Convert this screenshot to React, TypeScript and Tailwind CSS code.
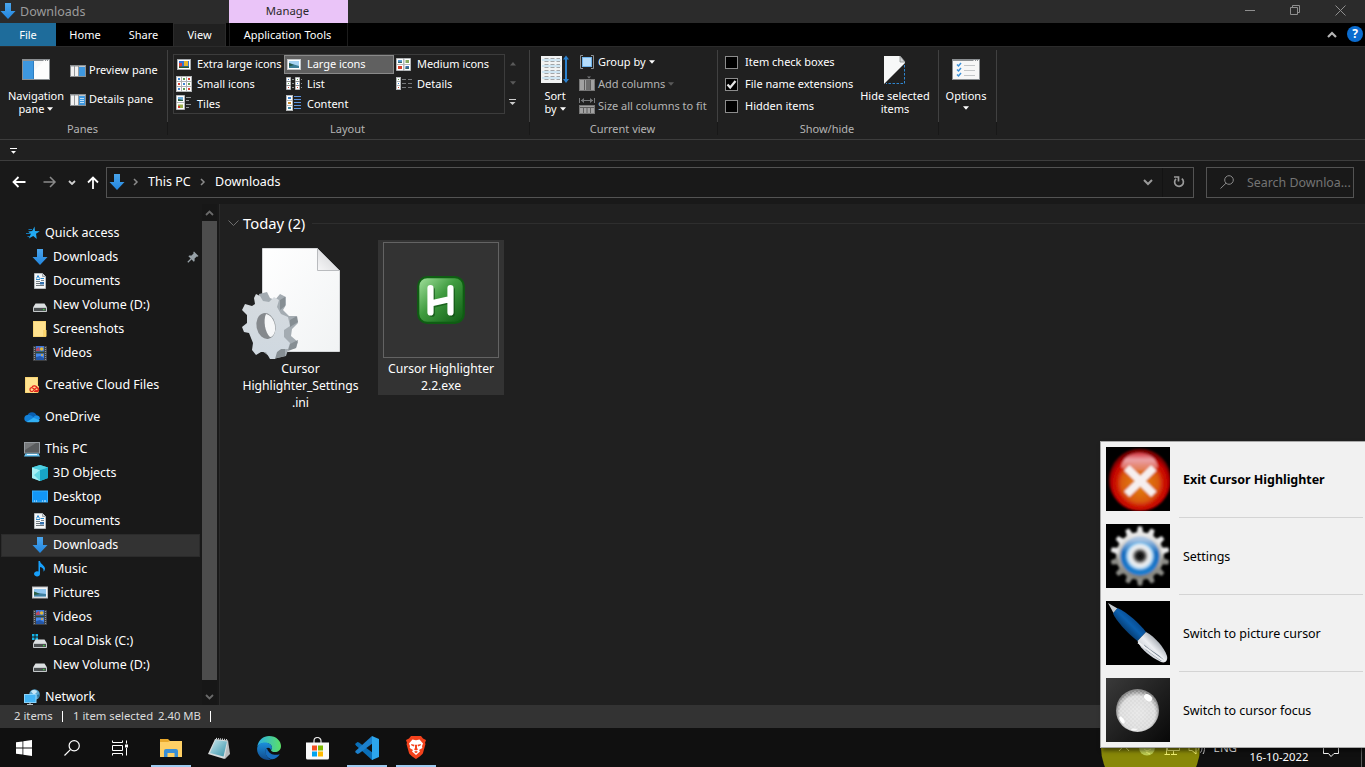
import type { ReactNode } from "react";

/* ---------- icons ---------- */

const Svg = ({ w, h, vb, children, className = "" }: { w: number; h: number; vb?: string; children: ReactNode; className?: string }) => (
  <svg width={w} height={h} viewBox={vb ?? `0 0 ${w} ${h}`} className={`block shrink-0 ${className}`}>
    {children}
  </svg>
);

const DownArrow = () => (
  <Svg w={16} h={16}>
    <defs>
      <linearGradient id="dl" x1="0" y1="0" x2="0" y2="1">
        <stop offset="0" stopColor="#4aa5ec" />
        <stop offset="1" stopColor="#2286df" />
      </linearGradient>
    </defs>
    <path d="M5 0H11V8H15.5L8 16L.5 8H5Z" fill="url(#dl)" />
  </Svg>
);

const Star = () => (
  <Svg w={16} h={16}>
    <path d="M10.5 1.5L11 6L15.8 6.2L12 8.8L12.8 14L9.2 10.9L4.8 13.5L6.8 9L4.2 6.5L8.2 6Z" fill="#22aaf2" />
    <path d="M4.5 4.5H8M2 8.5H6M3.5 11.5H6" stroke="#1577b5" strokeWidth="1" />
  </Svg>
);

const Doc = () => (
  <Svg w={16} h={16}>
    <path d="M2.5 .5H10.5L13.5 3.5V15.5H2.5Z" fill="#f4f6f7" stroke="#b4b9bc" />
    <path d="M10.5 .5V3.5H13.5" fill="#cfd4d7" stroke="#9ea4a8" />
    <path d="M4.5 5.500L6 2.5L7.5 5.500M4 6.5H8M8.5 5.500H12" stroke="#2a89cf" fill="none" />
    <path d="M4 8.5H8M9 7.5H12" stroke="#7c8488" />
    <path d="M4 10.5H8M4 12.5H12" stroke="#6d7478" />
    <rect x="8" y="9" width="4" height="2.500" fill="#2f6fae" />
  </Svg>
);

const Drive = ({ win = false }: { win?: boolean }) => (
  <Svg w={16} h={16}>
    {win && <path d="M0 1H2.500V3.500H0ZM3.500 1H6V3.500H3.500ZM0 4.500H2.500V7H0ZM3.500 4.500H6V7H3.500Z" fill="#13b5ea" />}
    <path d="M3.500 6.500H12.500L15 10.500H1Z" fill="#dcdfe1" />
    <rect x="1" y="10" width="14" height="5" rx="0.8" fill="#c4c8ca" />
    <rect x="2" y="11" width="12" height="3" fill="#4a4e50" />
    <rect x="11" y="12" width="1.500" height="1.200" fill="#35d839" />
  </Svg>
);

const Folder = ({ cc = false }: { cc?: boolean }) => (
  <Svg w={16} h={16}>
    <rect x="1" y="0" width="13" height="16" fill="#eec65c" />
    <path d="M1.500 0.5H13.500V9H11.500V15.5H1.500Z" fill="#ffe28f" />
    <rect x="12" y="9" width="2.500" height="6.5" fill="#ffd76b" />
    {cc && (
      <>
        <rect x="5" y="8" width="10" height="7.500" rx="3" fill="#ffd98a" />
        <path d="M9 14.500H7.500A2 2 0 0 1 7 10.800C8.500 9.800 10 12.500 11.500 13.200A1.500 1.500 0 1 0 12.500 10.800C11 10.500 9.800 14.500 8 14.500M8 9.800C9.500 8.300 12.500 8.500 13 10.500A2 2 0 0 1 12.500 14.500H10" stroke="#e2231a" strokeWidth="1.200" fill="none" />
      </>
    )}
  </Svg>
);

const Film = () => (
  <Svg w={16} h={16}>
    <rect x="1" y="1" width="14" height="15" fill="#3e4043" />
    <path d="M2.500 2V15M13.500 2V15" stroke="#8f9397" strokeWidth="1.200" strokeDasharray="1 1" />
    <rect x="4" y="1" width="8" height="7" fill="#3d74d9" />
    <rect x="4" y="8.500" width="8" height="6.500" fill="#4489ee" />
    <path d="M4 4L7 2L8 6H4Z" fill="#b94a60" />
    <circle cx="9.700" cy="4" r="1.800" fill="#e0b83a" />
    <path d="M4 8V6.500H12V8Z" fill="#314a2f" />
    <circle cx="10" cy="10" r="1" fill="#e0a83a" />
    <path d="M4 12L8 11L12 13V15H4Z" fill="#2457a8" />
  </Svg>
);

const Cloud = () => (
  <Svg w={16} h={16}>
    <path d="M3.500 6.500A4.800 4.800 0 0 1 12.500 6.300L14 8L8 10Z" fill="#0a5fb0" />
    <path d="M3.200 13A3.600 3.600 0 0 1 3.500 5.900C6 5.600 8 7 10 8.500L6 13Z" fill="#1280d8" />
    <path d="M10 7.500A3.500 3.500 0 0 1 16 9.500L14 12L8 10Z" fill="#1b8ee4" />
    <path d="M2.500 13L9.500 8.800L15.600 11.200A2.200 2.200 0 0 1 14 13.300H4Z" fill="#32b0f4" />
  </Svg>
);

const Pc = () => (
  <Svg w={16} h={16}>
    <rect x="0.5" y="1.500" width="15" height="10.500" fill="#77797b" stroke="#969ba0" />
    <path d="M1 11.500V9L12 2H15V11.500Z" fill="#5a5c5e" />
    <path d="M1.500 12.500H14.500L16 15.500H0Z" fill="#66c3f2" />
    <path d="M3 13.500H13" stroke="#e9f7ff" />
  </Svg>
);

const Cube = () => (
  <Svg w={16} h={16}>
    <path d="M8 0L16 2.500V13L8 16L0 13V2.500Z" fill="#38c3dc" />
    <path d="M0 2.500L8 5V16L0 13Z" fill="#a6f0f5" />
    <path d="M8 5L16 2.500V13L8 16Z" fill="#17a6c8" />
    <path d="M8 0L16 2.500L8 5L0 2.500Z" fill="#4fd0e2" />
    <path d="M8 5L2 10L8 16Z" fill="#62d8e4" />
  </Svg>
);

const DesktopI = () => (
  <Svg w={16} h={16}>
    <rect x="0.5" y="2" width="15" height="11" fill="#1296f5" stroke="#35aefc" />
    <path d="M2 12H3M4 12H5M10 12H11M12 12H14" stroke="#d6f0ff" />
  </Svg>
);

const Note = () => (
  <Svg w={16} h={16}>
    <path d="M6.500 0H8C8.200 3 12.500 4 13 7.500C13 9 12.300 10 11.500 10.700C12 7.800 10.500 6.500 8 6V12.500A3 2.600 0 1 1 6.500 10.600Z" fill="#18a0fb" />
  </Svg>
);

const Picture = () => (
  <Svg w={16} h={16}>
    <rect x="0.5" y="2" width="15" height="11" fill="#f5f6f7" stroke="#b9bcbf" />
    <rect x="2" y="4" width="12" height="7.500" fill="#8fc6f0" />
    <path d="M2 7L6 8L14 9V11.500H2Z" fill="#3f7fa0" />
    <path d="M2 6.500L8 9L2 10Z" fill="#2d6144" />
  </Svg>
);

const NetworkI = () => (
  <Svg w={16} h={16}>
    <circle cx="10.500" cy="5.500" r="5.300" fill="#5aa6cf" />
    <path d="M7 2.500C9 0 13 1 13 3L10 6Z" fill="#c6e6f5" />
    <path d="M13 6L16 5L14 10Z" fill="#2e749c" />
    <rect x="0.5" y="5.500" width="11.500" height="8" fill="#43b4f5" stroke="#8bd4fb" />
    <path d="M3 15.500H9M6 13.500V15" stroke="#b5bfc5" strokeWidth="1.200" />
  </Svg>
);

const Pin = () => (
  <Svg w={12} h={12}>
    <path d="M7 .5L11.500 5L10.500 5.700L9.800 5.400L7.600 7.600V10L6.800 10.700L1.400 5.300L2.200 4.500H4.600L6.700 2.300L6.300 1.300Z" fill="#98a2a8" />
    <path d="M4.300 7.800L.8 11.200" stroke="#98a2a8" strokeWidth="1.300" />
  </Svg>
);

const Chev = ({ d, w = 10, h = 6, c = "#8a8a8a", sw = 1.5 }: { d: string; w?: number; h?: number; c?: string; sw?: number }) => (
  <Svg w={w} h={h}>
    <path d={d} stroke={c} strokeWidth={sw} fill="none" />
  </Svg>
);

const Tri = ({ c = "#fff", up = false }: { c?: string; up?: boolean }) => (
  <Svg w={6} h={4}>
    <path d={up ? "M0 3.500H6L3 0Z" : "M0 .3H6L3 3.800Z"} fill={c} />
  </Svg>
);

const NavPaneIcon = () => (
  <Svg w={28} h={21}>
    <rect x=".5" y=".5" width="27" height="20" fill="#f7f7f7" stroke="#8b8f92" />
    <path d="M1 1H27V2H1Z" fill="#8b8f92" />
    <path d="M21.500 1.500H23M24 1.500H25M26 1.500H27" stroke="#f1f1f1" />
    <path d="M12 20V12L22 2H27V20Z" fill="#fdfdfd" />
    <rect x="1" y="2" width="11" height="18" fill="#3e98e0" />
    <rect x="11.200" y="2" width=".8" height="18" fill="#2a78bb" />
  </Svg>
);

const SmallPane = ({ lines = false }: { lines?: boolean }) => (
  <Svg w={16} h={12}>
    <rect x=".5" y=".5" width="15" height="11" fill="#f1f1f1" stroke="#8b8f92" />
    <path d="M1 1H15M4.500 1V11M8.500 1V11" stroke="#8b8f92" strokeWidth=".9" />
    <rect x="9" y="2" width="6" height="9" fill="#3e98e0" />
    {lines && <path d="M10 4.500H14M10 6.500H14M10 8.500H14" stroke="#bfe0fa" />}
  </Svg>
);

const GExtra = () => (
  <Svg w={16} h={16}>
    <rect x="1.500" y="2.500" width="13" height="10" fill="#fff" stroke="#a7abae" />
    <rect x="3" y="4" width="10" height="7" fill="#2f73d6" />
    <rect x="8" y="4" width="4" height="5" fill="#e4b52c" />
    <path d="M3 6H6V9L4 10L3 11Z" fill="#db4035" />
    <path d="M3 9.500H13V11H3Z" fill="#2d5d2b" />
  </Svg>
);
const GLarge = () => (
  <Svg w={16} h={16}>
    <rect x="1.500" y="2.500" width="13" height="10" fill="#fff" stroke="#c4c7c9" />
    <rect x="3" y="4" width="10" height="7" fill="#a5d2f2" />
    <path d="M3 6L13 9V11H3Z" fill="#3c7d96" />
    <path d="M3 6L8 8L3 9.500Z" fill="#27594a" />
  </Svg>
);
const GMedium = () => (
  <Svg w={16} h={16}>
    <path d="M.5 1.500H7.500V7.500H.5ZM8 1.500H14.500V7.500H8ZM.5 7.500H7.500V13.500H.5ZM8 7.500H14.500V13.500H8Z" fill="#fff" stroke="#b4b7b9" />
    <path d="M2 3H6V6H2Z" fill="#5a9fd8" />
    <path d="M9.500 3H13V6H9.500Z" fill="#86a95e" />
    <path d="M2 9H6V12H2Z" fill="#d6402c" />
    <path d="M9.500 9H13V12H9.500Z" fill="#3d6db2" />
    <path d="M2 4.700H6V6H2ZM9.500 10.500H13V12H9.500Z" fill="#35686d" />
  </Svg>
);
const GSmall = () => (
  <Svg w={16} h={16}>
    <rect x=".5" y=".5" width="15" height="15" fill="#fff" stroke="#b4b7b9" />
    <path d="M5.500 0V16M10.500 0V16M0 5.500H16M0 10.500H16" stroke="#aeb1b3" />
    <path d="M2 2H4V4H2ZM7 7H9V9H7ZM2 12H4V14H2Z" fill="#3f86d2" />
    <path d="M7 2H9V4H7ZM12 7H14V9H12ZM7 12H9V14H7Z" fill="#5d9c4d" />
    <path d="M2 7H4V9H2ZM12 2H14V4H12ZM12 12H14V14H12Z" fill="#d44435" />
  </Svg>
);
const GTiles = () => (
  <Svg w={16} h={16}>
    <path d="M.5 .5H8.500V7.500H.5ZM.5 7.500H8.500V14.500H.5Z" fill="#fff" stroke="#b4b7b9" />
    <path d="M2 2H7V6H2Z" fill="#6faede" />
    <path d="M2 4L7 5V6H2Z" fill="#2d6144" />
    <path d="M2 9.500H7V13H2Z" fill="#9cb04d" />
    <path d="M2 11H4V13H2Z" fill="#d6402c" />
    <path d="M10 2.500H15M10 5.500H13M10 9.500H15M10 12.500H13" stroke="#8f9294" />
  </Svg>
);
const GList = () => (
  <Svg w={16} h={16}>
    <path d="M.5 1.500H4.500V13.500H.5ZM9.500 1.500H13.500V13.500H9.500Z" fill="#fff" stroke="#b4b7b9" />
    <path d="M6 3.500H8M6 7.500H8M6 11.500H8M15 3.500H16M15 7.500H16M15 11.500H16M0 5.500H5M9 5.500H14M0 9.500H5M9 9.500H14" stroke="#8f9294" />
    <path d="M2 3H3V4H2ZM11 7H12V8H11Z" fill="#3b7dcc" />
    <path d="M2 7H3V8H2ZM11 3H12V4H11Z" fill="#5d9c4d" />
    <path d="M2 11H3V12H2ZM11 11H12V12H11Z" fill="#d44435" />
  </Svg>
);
const GContent = () => (
  <Svg w={16} h={16}>
    <rect x=".5" y=".5" width="6" height="15" fill="#fff" stroke="#b4b7b9" />
    <path d="M0 5.500H7M0 10.500H7" stroke="#b4b7b9" />
    <path d="M2 2H5V4H2Z" fill="#3f86d2" />
    <path d="M2 7H5V9H2Z" fill="#c98a33" />
    <path d="M2 12H5V14H2Z" fill="#3f86a2" />
    <path d="M8 1.500H15M8 4.500H15M8 7.500H15M8 10.500H15M8 13.500H15" stroke="#5c93dd" />
  </Svg>
);
const GDetails = () => (
  <Svg w={16} h={16}>
    <rect x=".5" y="1.500" width="4" height="12" fill="#fff" stroke="#b4b7b9" />
    <path d="M0 5.500H5M0 9.500H5" stroke="#b4b7b9" />
    <path d="M2 3H3V4H2Z" fill="#5d9c4d" />
    <path d="M2 7H3V8H2Z" fill="#3b7dcc" />
    <path d="M2 11H3V12H2Z" fill="#d44435" />
    <path d="M6 3.500H10M12 3.500H16M6 7.500H10M12 7.500H16M6 11.500H10M12 11.500H16" stroke="#77797b" />
  </Svg>
);

const SortIcon = () => (
  <Svg w={28} h={28}>
    <rect x="0" y="1" width="21" height="27" fill="#f2f3f3" />
    <path d="M1 5H20M1 11H20M1 17H20M1 23H20" stroke="#cfe6f3" strokeWidth="2" />
    <path d="M3.500 3.500H19M3.500 6.500H19M3.500 9.500H19M3.500 12.500H19M3.500 15.500H19M3.500 18.500H19M3.500 21.500H19M3.500 24.500H19" stroke="#a3a6a8" strokeDasharray="4 2" />
    <path d="M25 3V26" stroke="#2b82cf" strokeWidth="2" />
    <path d="M25 0.500L28 4.500H22ZM25 28L28 24H22Z" fill="#2b82cf" />
  </Svg>
);
const GroupIcon = () => (
  <Svg w={16} h={16}>
    <path d="M4 1.500H1.500V14.500H4M12 1.500H14.500V14.500H12" stroke="#8f9294" fill="none" />
    <rect x="3.500" y="3.500" width="9" height="9" fill="#b5dcfa" stroke="#6fb3ec" />
  </Svg>
);
const AddColIcon = () => (
  <Svg w={16} h={16}>
    <path d="M8 .5H12L10 2.500Z" fill="#77797b" />
    <rect x=".5" y="3.500" width="15" height="11" fill="#a2a2a2" stroke="#777" />
    <path d="M5.500 4V14M11.500 4V14" stroke="#5d5d5d" />
    <rect x="7" y="4" width="4" height="10" fill="#6d6d6d" />
  </Svg>
);
const SizeColIcon = () => (
  <Svg w={16} h={18}>
    <path d="M.5 1V6M15.500 1V6M2 3.500H14" stroke="#77797b" />
    <path d="M5 1L2 3.500L5 6ZM11 1L14 3.500L11 6Z" fill="#77797b" />
    <rect x=".5" y="8.500" width="15" height="8" fill="#a2a2a2" stroke="#777" />
    <path d="M1 10.500H15M4.500 10V16M8 10V16M11.500 10V16" stroke="#5d5d5d" />
  </Svg>
);
const HideIcon = () => (
  <Svg w={22} h={28}>
    <path d="M0 0H16L21 6V7L0 28Z" fill="#f7f8f8" />
    <path d="M16 0V6H21Z" fill="#d4d6d7" stroke="#8c8f91" strokeWidth=".8" />
    <path d="M20.500 9V27.500H2" stroke="#2f86d0" fill="none" strokeDasharray="2.500 1.500" />
  </Svg>
);
const OptionsIcon = () => (
  <Svg w={28} h={21}>
    <rect x=".5" y=".5" width="27" height="20" fill="#f7f7f7" stroke="#8b8f92" />
    <path d="M1 1H27V2H1Z" fill="#8b8f92" />
    <path d="M21.500 1.500H23M24 1.500H25M26 1.500H27" stroke="#f1f1f1" />
    <path d="M5 5.500L6.500 7L9 4M5 10.500L6.500 12L9 9M5 15.500L6.500 17L9 14" stroke="#3a90d8" strokeWidth="1.500" fill="none" />
    <path d="M12 6.500H23M12 11.500H23M12 16.500H23" stroke="#c3c6c8" />
  </Svg>
);

const IniIcon = () => (
  <Svg w={100} h={112}>
    <defs>
      <linearGradient id="pg" x1="0" y1="0" x2="1" y2="1">
        <stop offset="0" stopColor="#ffffff" />
        <stop offset="1" stopColor="#f1f3f4" />
      </linearGradient>
      <linearGradient id="fold" x1="0" y1="1" x2="1" y2="0">
        <stop offset="0" stopColor="#f7f7f8" />
        <stop offset="1" stopColor="#cccdd0" />
      </linearGradient>
      <linearGradient id="gearFace" x1="0" y1="0" x2="0" y2="1">
        <stop offset="0" stopColor="#d6dbdf" />
        <stop offset="1" stopColor="#cfd8e0" />
      </linearGradient>
    </defs>
    <path d="M20.500 1.500H75.500L97.500 23.500V104.500H20.500Z" fill="url(#pg)" stroke="#d5d7d9" />
    <path d="M75.500 1.500L97.500 23.500H75.500Z" fill="url(#fold)" stroke="#b9bbbe" />
    <path d="M17 47L25 45L28 51L33 53L38 47L44 50V58L41 63L47 69H54L56 76L50 82L49 89L56 95L54 101L46 103L44 109L31 112L20 104Z" fill="#a4acb2" />
    <path d="M38 53L43 50V59L38 63ZM48 73L55 69L56 75L48 80ZM48 97L56 93L54 101L46 104ZM36 103L43 101V109L31 112Z" fill="#868e93" />
    <path d="M12 51L14 47L18 49L21 54L27 55L32 50L37 53L35 60L39 67L46 70L48 79L42 83L42 90L48 96L46 102L39 102L35 105L33 112L28 112L24 105L19 105L14 108L10 103L11 96L7 86L2 85L0 80L5 76L5 68L0 63L3 57L10 59L13 57Z" fill="url(#gearFace)" />
    <ellipse cx="24" cy="79" rx="9.500" ry="13" fill="#85898d" transform="rotate(-12 24 79)" />
    <path d="M24 67C30 68 34 76 33 84C32 88 30 90 28 90C23 86 21 73 24 67Z" fill="#f6f7f8" />
  </Svg>
);

const AhkIcon = () => (
  <Svg w={48} h={48}>
    <defs>
      <linearGradient id="ahk" x1="0" y1="0" x2="1" y2="1">
        <stop offset="0" stopColor="#a5e3a0" />
        <stop offset=".45" stopColor="#3f9b3f" />
        <stop offset="1" stopColor="#0d5a12" />
      </linearGradient>
    </defs>
    <rect x="1.200" y="1.200" width="45.600" height="45.600" rx="9" fill="url(#ahk)" stroke="#0f5d13" strokeWidth="2.200" />
    <path d="M15 14V38M35 14V38M15 29L35 24" stroke="#0b4a10" strokeWidth="6" strokeLinecap="round" opacity=".6" />
    <path d="M13.500 12V36.500M33.500 12V36.500M13.500 27.500L33.500 23" stroke="#fff" strokeWidth="6.200" strokeLinecap="round" />
  </Svg>
);

const ExitIcon = () => (
  <Svg w={64} h={64}>
    <defs>
      <radialGradient id="ex" cx=".5" cy=".55" r=".5">
        <stop offset="0" stopColor="#e58a10" />
        <stop offset=".6" stopColor="#d95a08" />
        <stop offset=".78" stopColor="#cb0e06" />
        <stop offset=".9" stopColor="#c00404" />
        <stop offset="1" stopColor="#7a0000" />
      </radialGradient>
      <linearGradient id="exg" x1="0" y1="0" x2="0" y2="1">
        <stop offset="0" stopColor="#d2303a" />
        <stop offset=".4" stopColor="#eba4a8" />
        <stop offset="1" stopColor="#e88c80" stopOpacity=".6" />
      </linearGradient>
      <filter id="sf1"><feGaussianBlur stdDeviation="1.100" /></filter>
    </defs>
    <rect width="64" height="64" fill="#000" />
    <g filter="url(#sf1)">
      <circle cx="34" cy="33" r="31" fill="url(#ex)" />
      <path d="M15 20C19 1 48 1 52 20C45 25 22 25 15 20Z" fill="url(#exg)" />
      <path d="M23.500 23.500L45 44.500M45 23.500L23.500 44.500" stroke="#f6efef" strokeWidth="7.500" strokeLinecap="square" />
    </g>
  </Svg>
);

const teeth = Array.from({ length: 14 }, (_, i) => (i * 360) / 14);
const GearIcon = () => (
  <Svg w={64} h={64}>
    <defs>
      <linearGradient id="gt" x1="0" y1="0" x2="0" y2="1">
        <stop offset="0" stopColor="#f0f0f0" />
        <stop offset="1" stopColor="#77776f" />
      </linearGradient>
      <linearGradient id="gb" x1="0" y1="0" x2="0" y2="1">
        <stop offset="0" stopColor="#a9c4e2" />
        <stop offset=".4" stopColor="#1b6fbf" />
        <stop offset="1" stopColor="#1f7dcd" />
      </linearGradient>
      <radialGradient id="gc">
        <stop offset="0" stopColor="#050505" />
        <stop offset=".32" stopColor="#2a2a2a" />
        <stop offset=".6" stopColor="#ededed" />
        <stop offset=".8" stopColor="#dfe9f2" />
        <stop offset="1" stopColor="#59b0ea" />
      </radialGradient>
      <filter id="sf2"><feGaussianBlur stdDeviation="1.300" /></filter>
    </defs>
    <rect width="64" height="64" fill="#000" />
    <g filter="url(#sf2)">
      <circle cx="34" cy="32" r="24" fill="url(#gt)" />
      {teeth.map((a, i) => (
        <path key={a} d="M30.500 10L32 2.500H36L37.500 10Z" transform={`rotate(${a} 34 32)`} fill={i < 4 || i > 10 ? "#e8e8e8" : "#8b8b86"} />
      ))}
      <circle cx="34" cy="32" r="16.500" fill="none" stroke="url(#gb)" strokeWidth="6" />
      <circle cx="34" cy="32" r="14" fill="url(#gc)" />
    </g>
  </Svg>
);

const PenIcon = () => (
  <Svg w={64} h={64}>
    <defs>
      <linearGradient id="pb" x1="1" y1="0" x2="0" y2="1">
        <stop offset=".3" stopColor="#084585" />
        <stop offset=".48" stopColor="#0b60b0" />
        <stop offset=".72" stopColor="#06315c" />
      </linearGradient>
      <linearGradient id="pm" x1="1" y1="0" x2="0" y2="1">
        <stop offset=".25" stopColor="#9aa0a8" />
        <stop offset=".5" stopColor="#eceef2" />
        <stop offset=".75" stopColor="#c5cad1" />
      </linearGradient>
    </defs>
    <rect width="64" height="64" fill="#000" />
    <path d="M2 2L11.500 7.500L7.500 12Z" fill="#c8cdd1" />
    <path d="M11.500 7C22 12 33 22 40 31L31.500 40C20 31 10.500 20 7 12.500Z" fill="url(#pb)" />
    <path d="M40 31C49 36 58 46 61 55C62 60 59 62.500 55 61C45 56 35 49 31.500 40Z" fill="url(#pm)" />
    <path d="M38 43.500C44 49 52 53 57.500 58.500L55 60L40 49Z" fill="#6f7d8b" />
    <path d="M32 41.500C38 45 48 54 57 59.500" stroke="#eef0f3" strokeWidth="2" fill="none" />
  </Svg>
);

const LensIcon = () => (
  <Svg w={64} h={64}>
    <defs>
      <linearGradient id="lb" x1="0" y1="0" x2="1" y2="1">
        <stop offset="0" stopColor="#3a3a3a" />
        <stop offset="1" stopColor="#080808" />
      </linearGradient>
      <radialGradient id="lg" cx=".5" cy=".57" r=".52">
        <stop offset="0" stopColor="#e4e4e4" />
        <stop offset=".78" stopColor="#dadada" />
        <stop offset="1" stopColor="#8a8a8a" />
      </radialGradient>
      <pattern id="ck" width="4" height="4" patternUnits="userSpaceOnUse">
        <path d="M0 0H2V2H0ZM2 2H4V4H2Z" fill="#fff" opacity=".22" />
      </pattern>
    </defs>
    <rect width="64" height="64" fill="url(#lb)" />
    <circle cx="31.500" cy="32.500" r="21.500" fill="url(#lg)" />
    <circle cx="31.500" cy="32.500" r="20" fill="url(#ck)" />
    <ellipse cx="42.500" cy="19.500" rx="4.500" ry="3" fill="#fff" transform="rotate(35 42 19)" />
    <ellipse cx="16" cy="42" rx="1.800" ry="4" fill="#fff" transform="rotate(-32 16 42)" />
    <ellipse cx="28" cy="51.500" rx="3" ry="1" fill="#fff" opacity=".8" />
  </Svg>
);

/* ---------- ribbon ---------- */

const Group = ({ label, width, children }: { label: string; width: string; children: ReactNode }) => (
  <div className={`relative flex h-[92px] shrink-0 flex-col ${width}`}>
    <div className="flex h-[73px]">{children}</div>
    <div className="pr-[3px] text-center text-[11px] leading-[17px] text-[#b4b4b4]">{label}</div>
    <div className="absolute right-0 top-[3px] h-[72px] w-px bg-[#414141]" />
    <div className="absolute right-0 top-[75px] h-[13px] w-px bg-[#181818]" />
  </div>
);

const layouts: { icon: ReactNode; label: string; on?: boolean; up?: boolean }[] = [
  { icon: <GExtra />, label: "Extra large icons", up: true },
  { icon: <GLarge />, label: "Large icons", on: true, up: true },
  { icon: <GMedium />, label: "Medium icons", up: true },
  { icon: <GSmall />, label: "Small icons" },
  { icon: <GList />, label: "List" },
  { icon: <GDetails />, label: "Details" },
  { icon: <GTiles />, label: "Tiles" },
  { icon: <GContent />, label: "Content" },
];

const Check = ({ label, on = false }: { label: string; on?: boolean }) => (
  <div className="flex h-[22px] items-center gap-[7px]">
    <div className="grid h-[13px] w-[13px] place-items-center border border-[#8c8c8c] bg-black">
      {on && (
        <Svg w={11} h={11}>
          <path d="M1.500 5.500L4.200 8.500L9.500 2" stroke="#e6e6e6" strokeWidth="2.200" fill="none" />
        </Svg>
      )}
    </div>
    <span className="pb-[2px]">{label}</span>
  </div>
);

const Ribbon = () => (
  <div className="flex h-[93px] shrink-0 border-t border-[#2b2b2b] bg-[#202020] text-[11px] leading-[13px] text-white">
    <Group label="Panes" width="w-[168px]">
      <div className="flex w-[72px] flex-col items-center pt-[12px]">
        <NavPaneIcon />
        <div className="mt-[9px]">Navigation</div>
        <div className="flex items-center gap-[3px]">pane <Tri /></div>
      </div>
      <div className="-ml-[2px] flex flex-col pt-[9px]">
        <div className="flex h-[29px] items-center gap-[3px]"><SmallPane /><span className="pb-[2px]">Preview pane</span></div>
        <div className="flex h-[29px] items-center gap-[3px]"><SmallPane lines /><span className="pb-[2px]">Details pane</span></div>
      </div>
    </Group>
    <Group label="Layout" width="w-[362px]">
      <div className="ml-[5px] mt-[7px] flex">
        <div className="grid h-[60px] w-[332px] grid-cols-3 grid-rows-3 border border-[#3c3c3c]">
          {layouts.map((l) => (
            <div key={l.label} className={`flex items-center gap-[5px] whitespace-nowrap border pl-px ${l.on ? "border-[#8a8a8a] bg-[#606060]" : "border-transparent"}`}>
              {l.icon}
              <span className={l.up ? "pb-[2px] tracking-[-0.05px]" : ""}>{l.label}</span>
            </div>
          ))}
        </div>
        <div className="flex h-[60px] w-[15px] flex-col items-center justify-between pb-[8px] pt-[8px]">
          <Tri c="#5a5a5a" up />
          <Tri c="#5a5a5a" />
          <Svg w={7} h={7}>
            <path d="M0 .5H7" stroke="#ccc" />
            <path d="M.5 3H6.500L3.500 6Z" fill="#ccc" />
          </Svg>
        </div>
      </div>
    </Group>
    <Group label="Current view" width="w-[188px]">
      <div className="ml-[11px] flex w-[28px] flex-col items-center pt-[8px]">
        <SortIcon />
        <div className="mt-[6px]">Sort</div>
        <div className="flex items-center gap-[3px]">by <Tri /></div>
      </div>
      <div className="ml-[10px] flex flex-col whitespace-nowrap pt-[4px]">
        <div className="flex h-[22px] items-center gap-[3px]"><GroupIcon /><span className="pb-[2px]">Group by</span> <Tri /></div>
        <div className="flex h-[22px] items-center gap-[3px] text-[#b4b4b4]"><AddColIcon /><span className="pb-[2px]">Add columns</span> <Tri c="#5a5a5a" /></div>
        <div className="flex h-[22px] items-center gap-[3px] text-[#b4b4b4]"><SizeColIcon /><span className="pb-[2px]">Size all columns to fit</span></div>
      </div>
    </Group>
    <Group label="Show/hide" width="w-[221px]">
      <div className="ml-[7px] w-[134px] whitespace-nowrap pt-[4px]">
        <Check label="Item check boxes" />
        <Check label="File name extensions" on />
        <Check label="Hidden items" />
      </div>
      <div className="flex w-[72px] flex-col items-center whitespace-nowrap pt-[9px] text-center">
        <HideIcon />
        <div className="mt-[5px]">Hide selected<br />items</div>
      </div>
    </Group>
    <Group label="" width="w-[58px]">
      <div className="flex w-[54px] flex-col items-center pt-[12px]">
        <OptionsIcon />
        <div className="mb-1 mt-[9px]">Options</div>
        <Tri />
      </div>
    </Group>
  </div>
);

/* ---------- navigation tree ---------- */

const Row = ({ icon, label, top = false, pin = false, on = false }: { icon: ReactNode; label: string; top?: boolean; pin?: boolean; on?: boolean }) => (
  <div className="flex h-6 shrink-0 items-center pl-px">
    <div className={`flex h-[23px] w-[199px] items-center gap-[5px] border ${top ? "pl-[22px]" : "pl-[30px]"} ${on ? "border-[#2b2b2b] bg-[#333]" : "border-transparent"}`}>
      {icon}
      <span className="grow pb-px">{label}</span>
      {pin && <Pin />}
    </div>
  </div>
);

const Tree = () => (
  <div className="flex w-[201px] shrink-0 flex-col gap-2 overflow-hidden pt-[17px] text-[12.5px] leading-[18px] tracking-[-0.02px] text-white">
    <div className="shrink-0">
      <Row top icon={<Star />} label="Quick access" />
      <Row icon={<DownArrow />} label="Downloads" pin />
      <Row icon={<Doc />} label="Documents" />
      <Row icon={<Drive />} label="New Volume (D:)" />
      <Row icon={<Folder />} label="Screenshots" />
      <Row icon={<Film />} label="Videos" />
    </div>
    <Row top icon={<Folder cc />} label="Creative Cloud Files" />
    <Row top icon={<Cloud />} label="OneDrive" />
    <div className="shrink-0">
      <Row top icon={<Pc />} label="This PC" />
      <Row icon={<Cube />} label="3D Objects" />
      <Row icon={<DesktopI />} label="Desktop" />
      <Row icon={<Doc />} label="Documents" />
      <Row icon={<DownArrow />} label="Downloads" on />
      <Row icon={<Note />} label="Music" />
      <Row icon={<Picture />} label="Pictures" />
      <Row icon={<Film />} label="Videos" />
      <Row icon={<Drive win />} label="Local Disk (C:)" />
      <Row icon={<Drive />} label="New Volume (D:)" />
    </div>
    <Row top icon={<NetworkI />} label="Network" />
  </div>
);

/* ---------- context menu ---------- */

const menu = [
  { icon: <ExitIcon />, label: "Exit Cursor Highlighter", bold: true },
  { icon: <GearIcon />, label: "Settings" },
  { icon: <PenIcon />, label: "Switch to picture cursor" },
  { icon: <LensIcon />, label: "Switch to cursor focus" },
];

const TrayMenu = () => (
  <div className="absolute bottom-[19px] right-0 z-20 h-[307px] w-[265px] overflow-hidden border border-r-0 border-[#a8a8a8] bg-[#f1f1f1] pl-[5px] pt-[5px] text-black shadow-[2px_3px_4px_rgba(0,0,0,0.5)]">
    {menu.map((m, i) => (
      <div key={m.label} className="flex h-[77px] gap-[9px]">
        {m.icon}
        <div className={`h-[71px] w-[184px] pl-[4px] text-[12.5px] leading-[66px] tracking-[-0.04px] ${i < 3 ? "border-b border-[#d4d4d4]" : ""} ${m.bold ? "font-bold" : ""}`}>{m.label}</div>
      </div>
    ))}
  </div>
);

/* ---------- taskbar ---------- */

const Slot = ({ children, open = false, width = "w-12" }: { children: ReactNode; open?: boolean; width?: string }) => (
  <div className={`flex h-full flex-col items-center ${width}`}>
    <div className="grid h-[38px] place-items-center pt-[2px]">{children}</div>
    {open && <div className="mt-auto h-[2px] w-10 shrink-0 bg-[#9ecbf0]" />}
  </div>
);

const Taskbar = () => (
  <div className="flex h-[39px] shrink-0 bg-[#101010]">
    <Slot>
      <Svg w={16} h={16}><path d="M0 2.300L6.500 1.400V7.600H0ZM7.300 1.300L16 0V7.600H7.300ZM0 8.400H6.500V14.600L0 13.700ZM7.300 8.400H16V16L7.300 14.700Z" fill="#fff" /></Svg>
    </Slot>
    <Slot>
      <Svg w={16} h={16}><circle cx="10.200" cy="5.800" r="5.100" stroke="#fff" strokeWidth="1.200" fill="none" /><path d="M6.400 9.600L.5 15.500" stroke="#fff" strokeWidth="1.200" /></Svg>
    </Slot>
    <Slot>
      <Svg w={16} h={16}><path d="M.5 .5V2.500H10.500V.5M.5 15.500V13.500H10.500V15.500M.5 5.500H10.500V10.500H.5ZM14.500 .5V3.500M14.500 8V15.500" stroke="#fff" fill="none" /><rect x="13" y="4.500" width="3" height="3" fill="#fff" /></Svg>
    </Slot>
    <Slot open width="w-[54px]">
      <Svg w={22} h={20}>
        <path d="M0 1H8L10 3H21.500V17H0Z" fill="#e9a92c" />
        <path d="M0 4H8L10 3H22V19H0Z" fill="#ffd065" />
        <path d="M4 19V13A2 2 0 0 1 6 11H16A2 2 0 0 1 18 13V19H14.500V15H7.500V19Z" fill="#3a8fd6" />
      </Svg>
    </Slot>
    <Slot width="w-[43px]">
      <Svg w={23} h={23}>
        <defs>
          <linearGradient id="np" x1="0" y1="0" x2="1" y2="1"><stop offset="0" stopColor="#cbe9ee" /><stop offset=".6" stopColor="#6fb4c4" /><stop offset="1" stopColor="#3d93a9" /></linearGradient>
        </defs>
        <path d="M20 3L22 17L17 22L14 19Z" fill="#b9bcbd" />
        <path d="M7 2L20 3.500L16.500 22L0 17Z" fill="#d7dcdd" />
        <path d="M7.500 3L19 4.500L15.500 19.500L2 16Z" fill="url(#np)" />
        <path d="M8 1.500L20 3" stroke="#d9dcdd" strokeWidth="1.500" strokeDasharray="1 1" />
      </Svg>
    </Slot>
    <Slot width="w-[56px]">
      <Svg w={24} h={24}>
        <defs>
          <linearGradient id="e1" x1="0" y1="0" x2="1" y2="0"><stop offset="0" stopColor="#2aaee6" /><stop offset="1" stopColor="#5be067" /></linearGradient>
          <linearGradient id="e2" x1="0" y1="0" x2="0" y2="1"><stop offset="0" stopColor="#1b8fdc" /><stop offset="1" stopColor="#114a8b" /></linearGradient>
        </defs>
        <path d="M.3 10.500C1.500 4 6.500 0 12 0C19.500 0 24 5 24 10C24 14 21 16 18 16C15.500 16 14 15 14 14.200C14 13.600 15 13 15 11.400C15 9 12 7 8.500 7C4.500 7 1.500 8.500 .3 10.500Z" fill="url(#e1)" />
        <path d="M.1 13C.1 8.500 4 6.500 8 6.500C12 6.500 15 9 15 11.500C15 13 14 13.600 14 14.200C13 11.500 10.500 11 9 13C7.500 17 10 23 15 23.600C7 25.500 0 20 .1 13Z" fill="url(#e2)" />
        <path d="M8.500 14C7.500 18 10.500 23 15.500 23.300C18.500 22.800 21.500 20.500 22.700 18.200C19 19.500 12.500 19.500 10 12.500C9.300 12.800 8.700 13.300 8.500 14Z" fill="#176cbd" />
      </Svg>
    </Slot>
    <Slot width="w-[41px]">
      <Svg w={23} h={23}>
        <path d="M8 6V4A3.500 3.500 0 0 1 15 4V6" stroke="#e5e5e5" strokeWidth="1.200" fill="none" />
        <path d="M0 5.500H23V21A1.500 1.500 0 0 1 21.500 22.500H1.500A1.500 1.500 0 0 1 0 21Z" fill="#fafafa" />
        <path d="M6 8.500H11V13.500H6Z" fill="#f25022" /><path d="M12 8.500H17V13.500H12Z" fill="#7fba00" /><path d="M6 14.500H11V19.500H6Z" fill="#00a4ef" /><path d="M12 14.500H17V19.500H12Z" fill="#ffb900" />
      </Svg>
    </Slot>
    <Slot open width="w-[58px]">
      <Svg w={24} h={24}>
        <path d="M17 24L1 9.500L0 8L2.500 6L4 6.500L18 17V24Z" fill="#0a6fb8" />
        <path d="M18 7L4 17.500L2.500 18L0 16L1 14.500L17 0Z" fill="#1c80cc" />
        <path d="M17 0L24 3V21L17 24Z" fill="#2ca5ec" />
      </Svg>
    </Slot>
    <Slot open width="w-[40px]">
      <Svg w={20} h={23}>
        <path d="M5 0H15L17 2.500L20 4L19 7L19.500 8L17 17C16.500 18.500 12 22 10 23C8 22 3.500 18.500 3 17L.5 8L1 7L0 4L3 2.500Z" fill="#f4421c" />
        <path d="M6.500 3.500L10 4.300L13.500 3.500L17 7.500L16 10L16.300 12L13 14L14 15.500L10 19L6 15.500L7 14L3.700 12L4 10L3 7.500Z" fill="#fff" />
        <path d="M5 8L8.500 8.800L8 10.500L5.500 9.500ZM15 8L11.500 8.800L12 10.500L14.500 9.500ZM9 9V12L8 13.500L10 14.500L12 13.500L11 12V9L10 8.500ZM8 15.800L10 15L12 15.800L10 17.300Z" fill="#f4421c" />
      </Svg>
    </Slot>
    <div className="ml-auto flex h-full text-white">
      <div className="flex items-center gap-[8px] text-[11.5px]">
        <Svg w={12} h={8}><path d="M1 7L6 1.500L11 7" stroke="#d8d8d8" fill="none" /></Svg>
        <Svg w={18} h={18}><circle cx="9" cy="8.500" r="8" fill="#7f9ea6" /><path d="M6 10L9 12L13 10M8 13L12 15" stroke="#dbe8eb" fill="none" /></Svg>
        <Svg w={16} h={16}><path d="M3.500 2.500H15.500V10.500H3.500ZM2.500 5V14M.5 14.500H6M9.500 11V14M7 14.500H13" stroke="#e6e6e6" fill="none" /></Svg>
        <Svg w={17} h={16}><path d="M1 5.500H4L8 2V14L4 10.500H1ZM10 5.500C11 7 11 9 10 10.500M12.500 3.500C14.500 6 14.500 10 12.500 12.500M15 2C17 5 17 11 15 14" stroke="#e6e6e6" fill="none" /></Svg>
        <span className="pt-px leading-[38px]">ENG</span>
      </div>
      <div className="flex w-[84px] flex-col items-center pt-[3px] text-[11.300px] leading-[17px]">
        <span>01:04</span>
        <span>16-10-2022</span>
      </div>
      <div className="flex w-[40px] items-center pl-[2px] pt-[2px]">
        <Svg w={16} h={18}><path d="M.5 .5H15.500V13.500H11L8 16.500L5.500 13.500H.5Z" stroke="#fff" fill="none" /></Svg>
      </div>
      <div className="h-full w-[4px] border-l border-[#5c5c5c]" />
    </div>
  </div>
);

/* ---------- window ---------- */

export default function App() {
  return (
    <div className="relative flex h-[767px] w-[1365px] flex-col overflow-hidden bg-[#191919] font-['Noto_Sans',sans-serif]">
      <div className="flex h-[23px] shrink-0 items-center bg-[#2b2b2b]">
        <div className="pb-px"><DownArrow /></div>
        <span className="w-[213px] pl-[4px] text-[12.500px] leading-[20px] text-[#9b9b9b]">Downloads</span>
        <div className="h-[23px] w-[119px] bg-[#eac4f8] pr-[2px] text-center text-[11.300px] leading-[21px] tracking-[0.05px] text-[#2a2a2a]">Manage</div>
        <div className="ml-auto flex items-center gap-[35px] pb-[2px] pr-[19px]">
          <Svg w={10} h={11}><path d="M0 5.500H10" stroke="#8f8f8f" /></Svg>
          <Svg w={10} h={11}><path d="M.5 2.500H7.500V9.500H.5ZM2.500 2.500V.5H9.500V7.500H7.500" stroke="#8f8f8f" fill="none" /></Svg>
          <Svg w={11} h={11}><path d="M.5 .5L10.500 10.500M10.500 .5L.5 10.500" stroke="#8f8f8f" /></Svg>
        </div>
      </div>

      <div className="flex h-[23px] shrink-0 bg-black text-[11px] leading-[24px] text-white">
        <div className="w-[56px] bg-[#1e6c9b] text-center">File</div>
        <div className="w-[58px] text-center">Home</div>
        <div className="w-[59px] text-center">Share</div>
        <div className="h-[24px] w-[53px] border-x border-t border-[#2b2b2b] bg-[#202020] text-center leading-[22px]">View</div>
        <div className="ml-[3px] w-[119px] border-x border-[#1c1c1c] pr-[2px] text-center">Application Tools</div>
        <div className="ml-auto flex items-center gap-[10px] pb-px">
          <Chev d="M1 7L5 3L9 7" h={9} c="#b5b5b5" sw={2.2} />
          <div className="mr-[2px] h-4 w-4 rounded-full bg-[#0b6ccf] text-center text-[12px] font-bold leading-4">?</div>
        </div>
      </div>

      <Ribbon />

      <div className="flex h-[22px] shrink-0 items-center border-y border-[#3d3d3d] bg-[#202020] pl-[10px] pt-[2px]">
        <Svg w={7} h={6}><path d="M0 .5H7" stroke="#fff" /><path d="M1 3H6L3.500 5.800Z" fill="#fff" /></Svg>
      </div>

      <div className="flex h-[43px] shrink-0 items-center pb-px text-[12.500px] text-white">
        <div className="flex w-[106px] items-center pl-[12px]">
          <Svg w={14} h={12}><path d="M6.500 1L1.500 6L6.500 11M1.500 6H13.500" stroke="#fff" strokeWidth="1.800" fill="none" /></Svg>
          <Svg w={14} h={12} className="ml-[17px]"><path d="M7 1L12 6L7 11M12 6H.5" stroke="#8a8a8a" strokeWidth="1.500" fill="none" /></Svg>
          <div className="ml-[11px]"><Chev d="M1 1L4 4L7 1" w={8} h={5} c="#d0d0d0" sw={1.8} /></div>
          <Svg w={12} h={13} className="ml-[11px]"><path d="M1 6.500L6 1.500L11 6.500M6 1.500V13" stroke="#fff" strokeWidth="1.800" fill="none" /></Svg>
        </div>
        <div className="flex h-[31px] w-[1088px] items-center border border-[#535353] pl-[2px]">
          <div className="pb-px"><DownArrow /></div>
          <div className="ml-[8px] w-[15px]"><Chev d="M1 1L4 4L1 7" w={6} h={8} /></div>
          <span className="w-[52px] pt-px">This PC</span>
          <div className="w-[15px]"><Chev d="M1 1L4 4L1 7" w={6} h={8} /></div>
          <span className="pt-px">Downloads</span>
          <div className="ml-auto flex h-full items-center">
            <div className="pr-[9px]"><Chev d="M1 1L5 5L9 1" h={7} c="#999" sw={2} /></div>
            <div className="flex h-full w-[31px] items-center justify-center border-l border-[#131313] pl-[2px]">
              <Svg w={12} h={12}><path d="M3 2.800A4.400 4.400 0 1 0 8.800 2.600" stroke="#999" strokeWidth="1.700" fill="none" /><path d="M1 1H5.500V5.500" stroke="#999" strokeWidth="1.700" fill="none" /></Svg>
            </div>
          </div>
        </div>
        <div className="ml-[12px] flex h-[31px] w-[148px] items-center border border-[#535353] pl-[13px] text-[#747474]">
          <Svg w={14} h={14}><circle cx="9" cy="5" r="4.300" stroke="#8a8a8a" fill="none" /><path d="M6 8.200L.5 13.500" stroke="#8a8a8a" /></Svg>
          <span className="ml-[13px] whitespace-nowrap pt-[3px] text-[12.400px]">Search Downloa...</span>
        </div>
      </div>

      <div className="flex h-[501px] shrink-0">
        <Tree />
        <div className="ml-px flex w-[15px] flex-col items-center bg-[#171717] pb-[5px] pt-[6px]">
          <Chev d="M1 5L4.500 1.500L8 5" w={9} h={6} c="#6a6a6a" sw={1.8} />
          <div className="mt-[5px] h-[459px] w-[15px] shrink-0 bg-[#4d4d4d]" />
          <div className="mt-auto"><Chev d="M1 1L4.500 4.500L8 1" w={9} h={6} c="#6a6a6a" sw={1.8} /></div>
        </div>
        <div className="ml-[2px] grow border-l border-[#2b2b2b] bg-[#202020] pl-[8px]">
          <div className="flex h-[38px] items-center text-[14.800px] text-white">
            <Chev d="M.5 .5L5.500 5.500L10.500 .5" w={11} h={7} c="#6f6f6f" sw={1} />
            <span className="ml-[4px] w-[69px] leading-[20px]">Today (2)</span>
            <div className="h-px grow bg-[#2e2e2e]" />
          </div>
          <div className="flex text-center text-[12.200px] leading-[17px] tracking-[-0.03px] text-white">
            <div className="ml-[9px] flex w-[127px] flex-col items-center pt-[5px]">
              <div className="-ml-[18px] w-[100px]"><IniIcon /></div>
              <div className="mt-px">Cursor<br />Highlighter_Settings<br />.ini</div>
            </div>
            <div className="-mt-[2px] ml-[14px] flex h-[155px] w-[126px] flex-col items-center bg-[#333] pt-[2px]">
              <div className="grid h-[116px] w-[116px] place-items-center border border-[#636363]"><AhkIcon /></div>
              <div className="mt-[2px]">Cursor Highlighter<br />2.2.exe</div>
            </div>
          </div>
        </div>
      </div>

      <div className="flex h-[23px] shrink-0 items-center bg-[#333] pl-[14px] text-[11.300px] text-[#dcdcdc]">
        <span className="w-[48px]">2 items</span>
        <div className="h-[11px] w-px bg-white" />
        <span className="ml-[10px] w-[85px]">1 item selected</span>
        <span className="w-[52px]">2.40 MB</span>
        <div className="h-[11px] w-px bg-white" />
      </div>

      <Taskbar />
      <div className="absolute -bottom-[30px] right-[165px] z-10 h-[99px] w-[99px] rounded-full bg-[#ffff00]/50" />
      <TrayMenu />
    </div>
  );
}
